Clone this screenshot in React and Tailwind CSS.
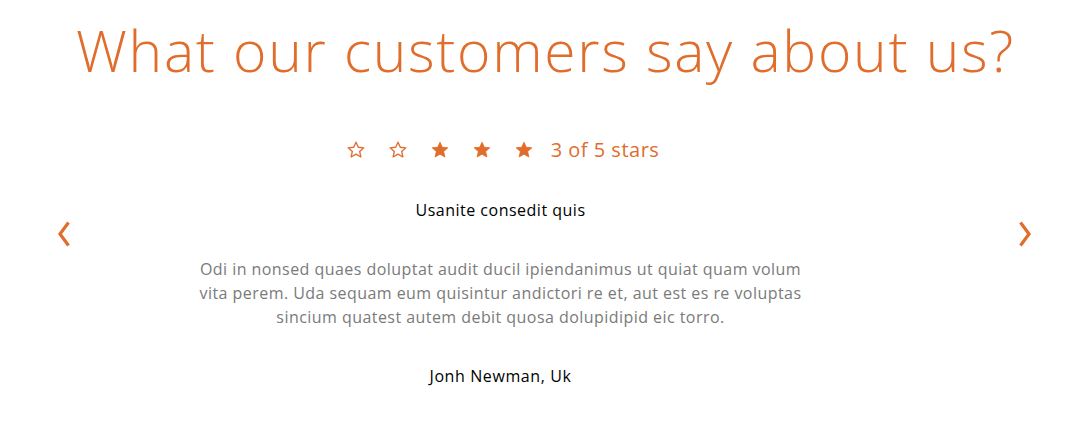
import { useState } from 'react'

const reviews = [
  {
    title: 'Usanite consedit quis',
    body: 'Odi in nonsed quaes doluptat audit ducil ipiendanimus ut quiat quam volum vita perem. Uda sequam eum quisintur andictori re et, aut est es re voluptas sincium quatest autem debit quosa dolupidipid eic torro.',
    author: 'Jonh Newman, Uk',
    rating: 3,
  },
]

function Star({ filled }) {
  return (
    <svg width="20" height="20" viewBox="0 0 24 24" className="text-[#e06d2c]">
      <path
        d="M12 2.6l2.75 6.1 6.65.65-5 4.45 1.45 6.55L12 17l-5.85 3.35 1.45-6.55-5-4.45 6.65-.65z"
        fill={filled ? 'currentColor' : 'none'}
        stroke="currentColor"
        strokeWidth={filled ? 1 : 1.6}
        strokeLinejoin="round"
      />
    </svg>
  )
}

function Arrow({ dir }) {
  return (
    <svg width="16" height="28" viewBox="0 0 16 28" className="text-[#e06d2c]">
      <path
        d={dir === 'left' ? 'M12.5 2.5L4 14l8.5 11.5' : 'M3.5 2.5L12 14 3.5 25.5'}
        fill="none"
        stroke="currentColor"
        strokeWidth="3.2"
      />
    </svg>
  )
}

export default function App() {
  const [idx, setIdx] = useState(0)
  const r = reviews[idx]

  return (
    <div className="min-h-[423px] w-full bg-white font-['Open_Sans',sans-serif]">
      <h1 className="pt-[14px] text-center text-[57px] font-light leading-[72px] tracking-[1.7px] text-[#e06d2c]">
        What our customers say about us?
      </h1>

      <div className="flex items-start justify-between pl-[56px] pr-[58px]">
        <button
          type="button"
          onClick={() => setIdx((idx + reviews.length - 1) % reviews.length)}
          className="mt-[134px]"
        >
          <Arrow dir="left" />
        </button>
        <div className="flex flex-1 flex-col items-center pr-[88px] text-center">
          <div className="mt-[49px] flex items-center gap-[22px] pl-[4px]">
            {[0, 1, 2, 3, 4].map((i) => (
              <Star key={i} filled={i >= 5 - r.rating} />
            ))}
            <span className="-ml-[5px] text-[20px] tracking-[0.5px] text-[#e06d2c]">
              {r.rating} of 5 stars
            </span>
          </div>
          <p className="mt-[34px] text-[16px] leading-[22px] tracking-[0.5px] text-black">
            {r.title}
          </p>
          <p className="mt-[36px] w-[606px] text-[16px] leading-[24px] tracking-[0.45px] text-[#7a7a7a]">
            {r.body}
          </p>
          <p className="mt-[36px] text-[16px] leading-[22px] tracking-[0.6px] text-black">
            {r.author}
          </p>
        </div>
        <button
          type="button"
          onClick={() => setIdx((idx + 1) % reviews.length)}
          className="mt-[134px]"
        >
          <Arrow dir="right" />
        </button>
      </div>
    </div>
  )
}
